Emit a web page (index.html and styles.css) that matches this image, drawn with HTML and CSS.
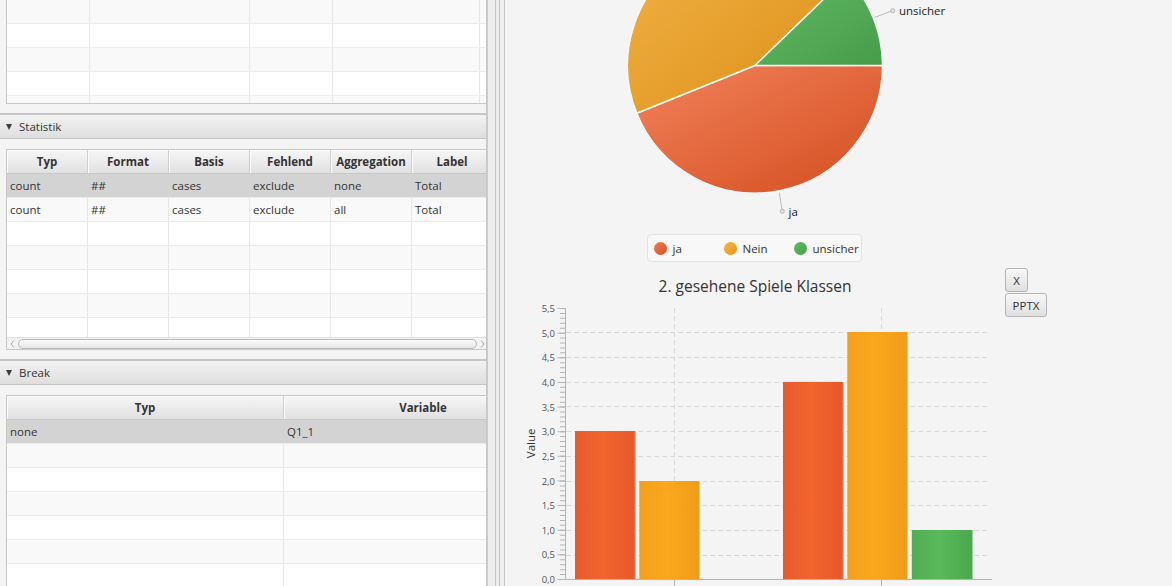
FILE: index.html
```html
<!DOCTYPE html>
<html>
<head>
<meta charset="utf-8">
<link rel="stylesheet" href="styles.css">
</head>
<body>
<div class="app">
  <div class="left">
    <div class="sec-top">
      <div class="tbl tbl-top">
        <div class="row odd"><div class="c"></div><div class="c"></div><div class="c"></div><div class="c"></div><div class="c"></div></div>
        <div class="row"><div class="c"></div><div class="c"></div><div class="c"></div><div class="c"></div><div class="c"></div></div>
        <div class="row odd"><div class="c"></div><div class="c"></div><div class="c"></div><div class="c"></div><div class="c"></div></div>
        <div class="row"><div class="c"></div><div class="c"></div><div class="c"></div><div class="c"></div><div class="c"></div></div>
        <div class="row odd"><div class="c"></div><div class="c"></div><div class="c"></div><div class="c"></div><div class="c"></div></div>
      </div>
    </div>

    <div class="tp tp-stat">
      <div class="tp-title"><span class="tri"></span>Statistik</div>
      <div class="tp-content">
        <div class="tbl tbl-stat">
          <div class="hdr"><div class="h">Typ</div><div class="h">Format</div><div class="h">Basis</div><div class="h">Fehlend</div><div class="h">Aggregation</div><div class="h">Label</div></div>
          <div class="body">
            <div class="row sel"><div class="c">count</div><div class="c">##</div><div class="c">cases</div><div class="c">exclude</div><div class="c">none</div><div class="c">Total</div></div>
            <div class="row odd"><div class="c">count</div><div class="c">##</div><div class="c">cases</div><div class="c">exclude</div><div class="c">all</div><div class="c">Total</div></div>
            <div class="row"><div class="c"></div><div class="c"></div><div class="c"></div><div class="c"></div><div class="c"></div><div class="c"></div></div>
            <div class="row odd"><div class="c"></div><div class="c"></div><div class="c"></div><div class="c"></div><div class="c"></div><div class="c"></div></div>
            <div class="row"><div class="c"></div><div class="c"></div><div class="c"></div><div class="c"></div><div class="c"></div><div class="c"></div></div>
            <div class="row odd"><div class="c"></div><div class="c"></div><div class="c"></div><div class="c"></div><div class="c"></div><div class="c"></div></div>
            <div class="row"><div class="c"></div><div class="c"></div><div class="c"></div><div class="c"></div><div class="c"></div><div class="c"></div></div>
          </div>
          <div class="hscroll">
            <div class="arr"><svg width="5" height="8" viewBox="0 0 5 8"><path d="M4 0.5 L1 4 L4 7.5" fill="none" stroke="#a8a8a8" stroke-width="1"/></svg></div>
            <div class="thumb"></div>
            <div class="arr"><svg width="5" height="8" viewBox="0 0 5 8"><path d="M1 0.5 L4 4 L1 7.5" fill="none" stroke="#a8a8a8" stroke-width="1"/></svg></div>
          </div>
        </div>
      </div>
    </div>

    <div class="tp tp-break">
      <div class="tp-title"><span class="tri"></span>Break</div>
      <div class="tp-content">
        <div class="tbl tbl-break">
          <div class="hdr"><div class="h">Typ</div><div class="h">Variable</div></div>
          <div class="row sel"><div class="c">none</div><div class="c">Q1_1</div></div>
          <div class="row odd"><div class="c"></div><div class="c"></div></div>
          <div class="row"><div class="c"></div><div class="c"></div></div>
          <div class="row odd"><div class="c"></div><div class="c"></div></div>
          <div class="row"><div class="c"></div><div class="c"></div></div>
          <div class="row odd"><div class="c"></div><div class="c"></div></div>
          <div class="row"><div class="c"></div><div class="c"></div></div>
        </div>
      </div>
    </div>
  </div>

  <div class="divider"></div>

  <div class="right">
    <div class="pie-area">
      <svg class="pie" width="667" height="234" viewBox="0 0 667 234">
        <defs>
          <linearGradient id="pja" x1="0" y1="0" x2="1" y2="1">
            <stop offset="0" stop-color="#f2825a"/>
            <stop offset="1" stop-color="#d44d20"/>
          </linearGradient>
          <linearGradient id="pnein" x1="0" y1="0" x2="1" y2="1">
            <stop offset="0" stop-color="#f1b346"/>
            <stop offset="1" stop-color="#dc8e16"/>
          </linearGradient>
          <linearGradient id="pun" x1="0" y1="0" x2="1" y2="1">
            <stop offset="0" stop-color="#62bb65"/>
            <stop offset="1" stop-color="#479b49"/>
          </linearGradient>
        </defs>
        <path class="slice" fill="url(#pja)" d="M250 65.5 L377.5 65.5 A127.5 127.5 0 0 1 131.78 113.26 Z"/>
        <path class="slice" fill="url(#pnein)" d="M250 65.5 L131.78 113.26 A127.5 127.5 0 0 1 341.72 -23.07 Z"/>
        <path class="slice" fill="url(#pun)" d="M250 65.5 L341.72 -23.07 A127.5 127.5 0 0 1 377.5 65.5 Z"/>
        <path class="leader" d="M370 17.3 L386 11.2"/>
        <circle class="ldot" cx="387.7" cy="10.7" r="2"/>
        <text class="plabel" x="394" y="15">unsicher</text>
        <path class="leader" d="M274.3 192.7 L277 209"/>
        <circle class="ldot" cx="277.3" cy="211.3" r="2"/>
        <text class="plabel" x="283.5" y="216">ja</text>
      </svg>
    </div>

    <div class="legend-row">
      <div class="legend">
        <div class="li"><span class="sym s-ja"></span>ja</div>
        <div class="li"><span class="sym s-nein"></span>Nein</div>
        <div class="li"><span class="sym s-un"></span>unsicher</div>
      </div>
    </div>

    <div class="chart-row">
      <div class="chart-col">
        <div class="chart-title">2. gesehene Spiele Klassen</div>
        <svg class="bars" width="500" height="290" viewBox="0 0 500 290">
          <defs>
            <linearGradient id="bja" x1="0" y1="0" x2="1" y2="0">
              <stop offset="0" stop-color="#e65a2c"/>
              <stop offset="0.45" stop-color="#f3642e"/>
              <stop offset="1" stop-color="#e4582a"/>
            </linearGradient>
            <linearGradient id="bnein" x1="0" y1="0" x2="1" y2="0">
              <stop offset="0" stop-color="#f2a11b"/>
              <stop offset="0.45" stop-color="#fba81d"/>
              <stop offset="1" stop-color="#ee9d1b"/>
            </linearGradient>
            <linearGradient id="bun" x1="0" y1="0" x2="1" y2="0">
              <stop offset="0" stop-color="#51ad53"/>
              <stop offset="0.45" stop-color="#59b95b"/>
              <stop offset="1" stop-color="#4ba84d"/>
            </linearGradient>
          </defs>
          <g class="grid">
            <line x1="61" x2="483" y1="36.5" y2="36.5"/>
            <line x1="61" x2="483" y1="61.5" y2="61.5"/>
            <line x1="61" x2="483" y1="86.5" y2="86.5"/>
            <line x1="61" x2="483" y1="110.5" y2="110.5"/>
            <line x1="61" x2="483" y1="135.5" y2="135.5"/>
            <line x1="61" x2="483" y1="160.5" y2="160.5"/>
            <line x1="61" x2="483" y1="185.5" y2="185.5"/>
            <line x1="61" x2="483" y1="209.5" y2="209.5"/>
            <line x1="61" x2="483" y1="234.5" y2="234.5"/>
            <line x1="61" x2="483" y1="259.5" y2="259.5"/>
            <line x1="169.5" x2="169.5" y1="12" y2="283"/>
            <line x1="376.5" x2="376.5" y1="12" y2="283"/>
          </g>
          <rect x="70" y="135" width="60.7" height="148" fill="url(#bja)"/>
          <rect class="hl" x="129.7" y="135" width="1" height="148"/>
          <rect x="134.3" y="185" width="60.7" height="98" fill="url(#bnein)"/>
          <rect class="hl" x="194" y="185" width="1" height="98"/>
          <rect x="278" y="86" width="60.7" height="197" fill="url(#bja)"/>
          <rect class="hl" x="337.7" y="86" width="1" height="197"/>
          <rect x="342.3" y="36" width="60.7" height="247" fill="url(#bnein)"/>
          <rect class="hl" x="402" y="36" width="1" height="247"/>
          <rect x="406.8" y="234" width="60.7" height="49" fill="url(#bun)"/>
          <g class="axis">
            <line x1="60.5" x2="60.5" y1="12" y2="284"/>
            <line x1="60" x2="487" y1="283.5" y2="283.5"/>
            <line class="minor" x1="57.5" x2="57.5" y1="284" y2="11"/>
            <line class="major" x1="56.25" x2="56.25" y1="284" y2="11"/>
            <line x1="169.5" x2="169.5" y1="283" y2="290"/>
            <line x1="376.5" x2="376.5" y1="283" y2="290"/>
          </g>
          <g class="ticklbl">
            <text x="50" y="287">0,0</text>
            <text x="50" y="262.4">0,5</text>
            <text x="50" y="237.7">1,0</text>
            <text x="50" y="213.1">1,5</text>
            <text x="50" y="188.5">2,0</text>
            <text x="50" y="163.8">2,5</text>
            <text x="50" y="139.2">3,0</text>
            <text x="50" y="114.5">3,5</text>
            <text x="50" y="89.9">4,0</text>
            <text x="50" y="65.3">4,5</text>
            <text x="50" y="40.6">5,0</text>
            <text x="50" y="16">5,5</text>
          </g>
          <text class="axis-title" transform="translate(29.5 147.3) rotate(-90)">Value</text>
        </svg>
      </div>
      <div class="btns">
        <button class="btn btn-x">X</button>
        <button class="btn btn-pptx">PPTX</button>
      </div>
    </div>
  </div>
</div>
</body>
</html>
```

FILE: styles.css
```css
* { box-sizing: border-box; }
html, body { margin: 0; padding: 0; }
body {
  width: 1172px;
  height: 586px;
  overflow: hidden;
  background: #f4f4f4;
  color: #333;
  font-family: "Open Sans", "Noto Sans", sans-serif;
  font-size: 11.5px;
}
.app { display: flex; height: 586px; }

/* ---------- left ---------- */
.left {
  width: 486px;
  flex: none;
  overflow: hidden;
  display: flex;
  flex-direction: column;
}
.sec-top { flex: none; height: 113px; padding: 0 0 9px 6px; }

.tbl {
  width: 483px;
  border: 1px solid #c8c8c8;
  background: #fff;
  overflow: hidden;
}
.tbl-top { height: 104px; border-top: none; }
.tbl-stat { height: 201px; }
.tbl-stat .body { height: 163px; overflow: hidden; }
.tbl-break { height: 200px; border-bottom: none; }

.row {
  display: grid;
  height: 24px;
  border-bottom: 1px solid #ececec;
  background: #fff;
}
.row.odd { background: #f9f9f9; }
.row.sel { background: #d3d3d3; }
.c {
  border-right: 1px solid #e8e8e8;
  padding-left: 3px;
  line-height: 23px;
  white-space: nowrap;
  overflow: hidden;
  color: #333;
}
.row.sel .c { border-right-color: #d3d3d3; }

.hdr { display: grid; height: 24px; }
.h {
  background: linear-gradient(#f6f6f6, #e1e1e1);
  border-right: 1px solid #cfcfcf;
  border-bottom: 1px solid #c8c8c8;
  box-shadow: inset 1px 1px 0 #fbfbfb;
  font-weight: bold;
  text-align: center;
  line-height: 23px;
  color: #333;
  white-space: nowrap;
  overflow: hidden;
}

.tbl-top .row { grid-template-columns: 83px 160px 83px 147px 100px; }
.tbl-stat .row, .tbl-stat .hdr { grid-template-columns: repeat(6, 81px); }
.tbl-break .row, .tbl-break .hdr { grid-template-columns: 277px 279px; }

.hscroll {
  height: 12px;
  border-top: 1px solid #dedede;
  background: #f3f3f3;
  display: grid;
  grid-template-columns: 11px 459px 11px;
  align-items: center;
}
.arr { display: flex; justify-content: center; align-items: center; height: 11px; }
.thumb {
  height: 10px;
  border: 1px solid #b9b9b9;
  border-radius: 5px;
  background: linear-gradient(#fbfbfb, #e6e6e6);
}

.tp { display: flex; flex-direction: column; flex: none; }
.tp-break { flex: 1; }
.tp-title {
  height: 26px;
  flex: none;
  border-top: 2px solid #c6c6c6;
  border-bottom: 1px solid #c6c6c6;
  background: linear-gradient(#f3f3f3, #dedede);
  display: flex;
  align-items: center;
  color: #333;
}
.tri {
  width: 0;
  height: 0;
  border-left: 3.5px solid transparent;
  border-right: 3.5px solid transparent;
  border-top: 6px solid #3d3d3d;
  margin-left: 6px;
  margin-right: 7px;
}
.tp-content { padding: 10px 0 9px 6px; }
.tp-break .tp-content { padding-bottom: 0; }

/* ---------- divider ---------- */
.divider {
  width: 19px;
  flex: none;
  background: linear-gradient(to right,
    #c6c6c6 0, #cdcdcd 2px,
    #ededed 2px, #ededed 9px,
    #c6c6c6 9px, #c6c6c6 10px,
    #ededed 10px, #ededed 13px,
    #c6c6c6 13px, #c6c6c6 14px,
    #efefef 14px, #efefef 18px,
    #c6c6c6 18px, #c6c6c6 19px);
}

/* ---------- right ---------- */
.right { flex: 1; display: flex; flex-direction: column; min-width: 0; }
.pie-area { height: 234px; flex: none; }
.pie { display: block; }
.slice { stroke: #f7f7f7; stroke-width: 1.5; stroke-linejoin: round; }
.leader { stroke: #bdbdbd; stroke-width: 1; fill: none; }
.ldot { fill: #e4e4e4; stroke: #b5b5b5; stroke-width: 1; }
.plabel { font-family: "Open Sans", "Noto Sans", sans-serif; font-size: 11.5px; fill: #222; }

.legend-row { height: 28px; flex: none; padding-left: 142px; }
.legend {
  width: 215px;
  height: 28px;
  display: grid;
  grid-template-columns: repeat(3, 63px);
  column-gap: 7px;
  align-items: center;
  padding-left: 5.5px;
  border: 1px solid #e3e3e3;
  border-radius: 4px;
  background: #f8f8f8;
}
.li { display: flex; align-items: center; gap: 6px; color: #333; white-space: nowrap; }
.sym { width: 13px; height: 13px; border-radius: 50%; flex: none; }
.s-ja { background: linear-gradient(135deg, #f27a52, #dc5226); }
.s-nein { background: linear-gradient(135deg, #f7b444, #e8981a); }
.s-un { background: linear-gradient(135deg, #60ba62, #46a048); }

.chart-row { flex: 1; display: flex; }
.chart-col {
  width: 500px;
  flex: none;
  display: flex;
  flex-direction: column;
  align-items: center;
  padding-top: 14px;
}
.chart-title {
  height: 20px;
  line-height: 20px;
  font-size: 15.5px;
  color: #333;
  white-space: nowrap;
}
.bars { display: block; flex: none; }
.grid line { stroke: #d9d9d9; stroke-width: 1; stroke-dasharray: 5 3; }
.hl { fill: #ffffff; opacity: 0.45; }
.axis line { stroke: #b4b4b4; stroke-width: 1; }
.axis line.minor { stroke-width: 5; stroke-dasharray: 1 3.927; }
.axis line.major { stroke-width: 7.5; stroke-dasharray: 1 23.636; }
.ticklbl text {
  font-family: "Open Sans", "Noto Sans", sans-serif;
  font-size: 9.5px;
  fill: #555;
  text-anchor: end;
}
.axis-title {
  font-family: "Open Sans", "Noto Sans", sans-serif;
  font-size: 11.5px;
  fill: #333;
  text-anchor: middle;
}

.btns {
  padding-top: 6px;
  display: flex;
  flex-direction: column;
  align-items: flex-start;
  gap: 1px;
}
.btn {
  height: 24px;
  padding: 0;
  margin: 0;
  font-family: "Open Sans", "Noto Sans", sans-serif;
  font-size: 11.5px;
  color: #333;
  border: 1px solid #b5b5b5;
  border-radius: 3px;
  background: linear-gradient(#f7f7f7, #e0e0e0);
}
.btn-x { width: 23px; }
.btn-pptx { width: 42px; }
```
